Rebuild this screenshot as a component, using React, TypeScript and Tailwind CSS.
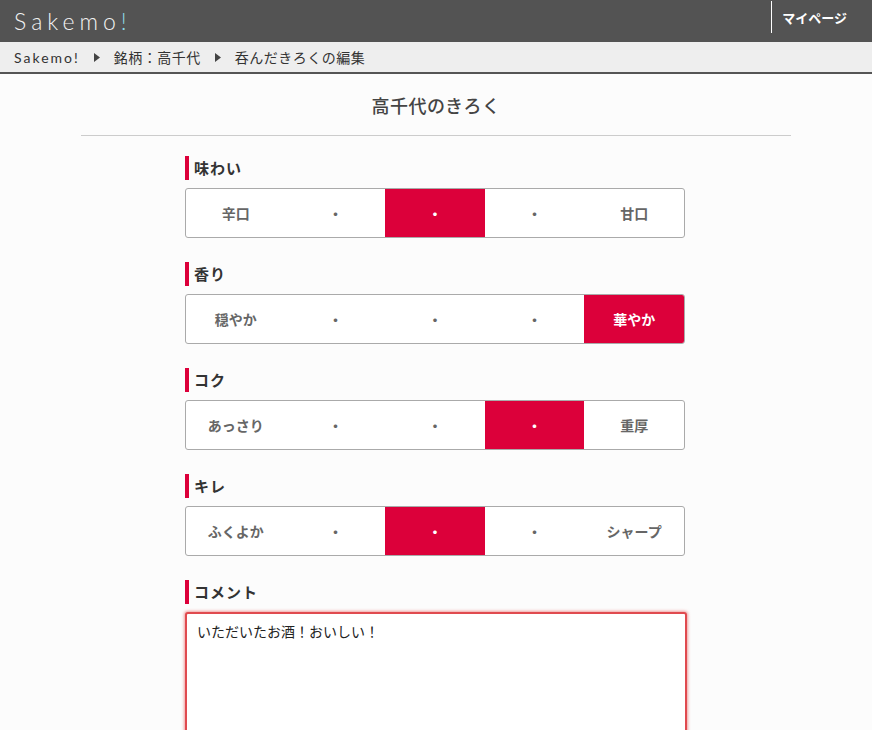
import React from "react";

const sans = "font-['Noto_Sans_CJK_JP','Noto_Sans',sans-serif]";

type Scale = { label: string; left: string; right: string; selected: number };

const scales: Scale[] = [
  { label: "味わい", left: "辛口", right: "甘口", selected: 2 },
  { label: "香り", left: "穏やか", right: "華やか", selected: 4 },
  { label: "コク", left: "あっさり", right: "重厚", selected: 3 },
  { label: "キレ", left: "ふくよか", right: "シャープ", selected: 2 },
];

function Arrow() {
  return (
    <svg width="6" height="9" viewBox="0 0 6 9" className="mx-[14px] inline-block">
      <path d="M0 0 L6 4.5 L0 9 Z" fill="#444" />
    </svg>
  );
}

function SectionLabel({ children }: { children: React.ReactNode }) {
  return (
    <div className="flex items-center h-[24px]">
      <span className="w-[4px] h-[24px] bg-[#dc003a]" />
      <span className="ml-[5px] text-[15px] font-bold text-[#333] tracking-[1px]">{children}</span>
    </div>
  );
}

function ScaleRow({ s }: { s: Scale }) {
  const cells = [s.left, "・", "・", "・", s.right];
  return (
    <div className="mt-[8px] w-[500px] flex border border-[#aaa] rounded-[3px] overflow-hidden bg-white">
      {cells.map((c, i) => (
        <div
          key={i}
          className={
            "flex-1 h-[48px] flex items-center justify-center text-[14px] font-semibold " +
            (i === s.selected ? "bg-[#dc003a] text-white" : "text-[#666]")
          }
        >
          {c}
        </div>
      ))}
    </div>
  );
}

export default function App() {
  return (
    <div className={`min-h-[730px] bg-[#fcfcfc] ${sans}`}>
      <header className="h-[42px] bg-[#535353] flex items-center justify-between">
        <div className="pl-[14px] text-[23px] tracking-[5px] text-[#f2f2f2] font-['Lato',sans-serif] font-light leading-none">
          Sakemo<span className="text-[#8fdbe6]">!</span>
        </div>
        <div className="flex items-center h-full">
          <span className="w-px h-[32px] bg-white mb-[8px]" />
          <span className="pl-[10px] pr-[25px] text-[13px] font-bold text-white mb-[6px]">マイページ</span>
        </div>
      </header>
      <nav className="h-[32px] bg-[#eeeeee] border-b-2 border-[#555] flex items-center pl-[14px] text-[14px] text-[#333] tracking-[0.5px]">
        <span className="font-['Lato',sans-serif] tracking-[2px]">Sakemo!</span>
        <Arrow />
        <span>銘柄：高千代</span>
        <Arrow />
        <span>呑んだきろくの編集</span>
      </nav>
      <main>
        <div className="mx-auto w-[710px] border-b border-[#ccc] h-[62px] flex items-center justify-center">
          <h1 className="text-[18px] font-medium text-[#444] tracking-[0.5px] mt-[2px]">高千代のきろく</h1>
        </div>
        <div className="mx-auto w-[502px] pt-[20px]">
          {scales.map((s) => (
            <section key={s.label} className="mb-[24px]">
              <SectionLabel>{s.label}</SectionLabel>
              <ScaleRow s={s} />
            </section>
          ))}
          <section>
            <SectionLabel>コメント</SectionLabel>
            <textarea
              defaultValue="いただいたお酒！おいしい！"
              className="mt-[8px] w-[502px] h-[150px] bg-white border-2 border-[#e04a4f] rounded-[3px] shadow-[0_0_3px_1px_rgba(230,80,80,0.55)] px-[10px] py-[8px] text-[14px] text-[#222] outline-none resize-none font-['Liberation_Serif','Noto_Sans_CJK_JP',serif]"
            />
          </section>
        </div>
      </main>
    </div>
  );
}
